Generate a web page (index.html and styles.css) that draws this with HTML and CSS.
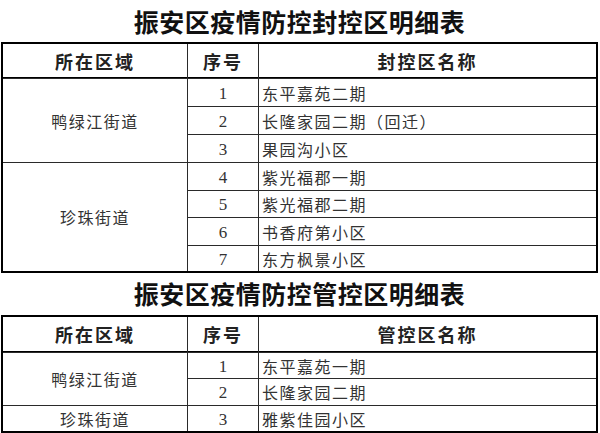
FILE: index.html
```html
<!DOCTYPE html>
<html lang="zh">
<head>
<meta charset="utf-8">
<link rel="stylesheet" href="styles.css">
</head>
<body>
<div class="page">
  <h1 class="title t1">振安区疫情防控封控区明细表</h1>
  <div class="sheet sheet1" role="table">
    <div class="cell th">所在区域</div><div class="cell th">序号</div><div class="cell th">封控区名称</div>
    <div class="cell area span3">鸭绿江街道</div><div class="cell num">1</div><div class="cell name">东平嘉苑二期</div>
    <div class="cell num">2</div><div class="cell name">长隆家园二期（回迁）</div>
    <div class="cell num">3</div><div class="cell name">果园沟小区</div>
    <div class="cell area span4">珍珠街道</div><div class="cell num">4</div><div class="cell name">紫光福郡一期</div>
    <div class="cell num">5</div><div class="cell name">紫光福郡二期</div>
    <div class="cell num">6</div><div class="cell name">书香府第小区</div>
    <div class="cell num">7</div><div class="cell name">东方枫景小区</div>
  </div>
  <h1 class="title t2">振安区疫情防控管控区明细表</h1>
  <div class="sheet sheet2" role="table">
    <div class="cell th">所在区域</div><div class="cell th">序号</div><div class="cell th">管控区名称</div>
    <div class="cell area span2">鸭绿江街道</div><div class="cell num">1</div><div class="cell name">东平嘉苑一期</div>
    <div class="cell num">2</div><div class="cell name">长隆家园二期</div>
    <div class="cell area">珍珠街道</div><div class="cell num">3</div><div class="cell name">雅紫佳园小区</div>
  </div>
</div>
</body>
</html>
```
FILE: styles.css
```css
html, body {
  margin: 0;
  padding: 0;
  background: #fff;
}
.page {
  width: 600px;
  height: 433px;
  overflow: hidden;
  padding: 0 2px 0 1px;
  box-sizing: border-box;
  font-family: "Noto Sans CJK SC", "Noto Sans", sans-serif;
  color: #333;
}
.title {
  margin: 0;
  text-align: center;
  font-size: 25px;
  font-weight: 700;
  color: #111;
  letter-spacing: 0.5px;
}
.t1 {
  height: 42px;
  line-height: 43px;
}
.t2 {
  height: 42px;
  line-height: 40px;
}
.sheet {
  display: grid;
  grid-template-columns: 184px 70px 1fr;
  gap: 1px;
  border: 2px solid #000;
  background: #2a2a2a;
}
.sheet1 {
  grid-template-rows: 34px 27px 27px 27px 27px 26px 27px 25px;
}
.sheet2 {
  grid-template-rows: 35px 25px 26px 25px;
}
.cell {
  background: #fff;
  display: flex;
  align-items: center;
  justify-content: center;
  font-size: 16px;
  line-height: 18px;
  min-width: 0;
  white-space: nowrap;
}
.th {
  font-size: 18px;
  font-weight: 700;
  color: #222;
  letter-spacing: 2px;
  border-bottom: 1px solid #000;
}
.area {
  grid-column: 1;
  letter-spacing: 1.5px;
}
.span2 { grid-row: span 2; }
.span3 { grid-row: span 3; }
.span4 { grid-row: span 4; }
.num {
  grid-column: 2;
  font-family: "Liberation Serif", serif;
  font-size: 17px;
  padding-top: 2px;
}
.name {
  grid-column: 3;
  justify-content: flex-start;
  padding-left: 3px;
  letter-spacing: 1.5px;
}
```
